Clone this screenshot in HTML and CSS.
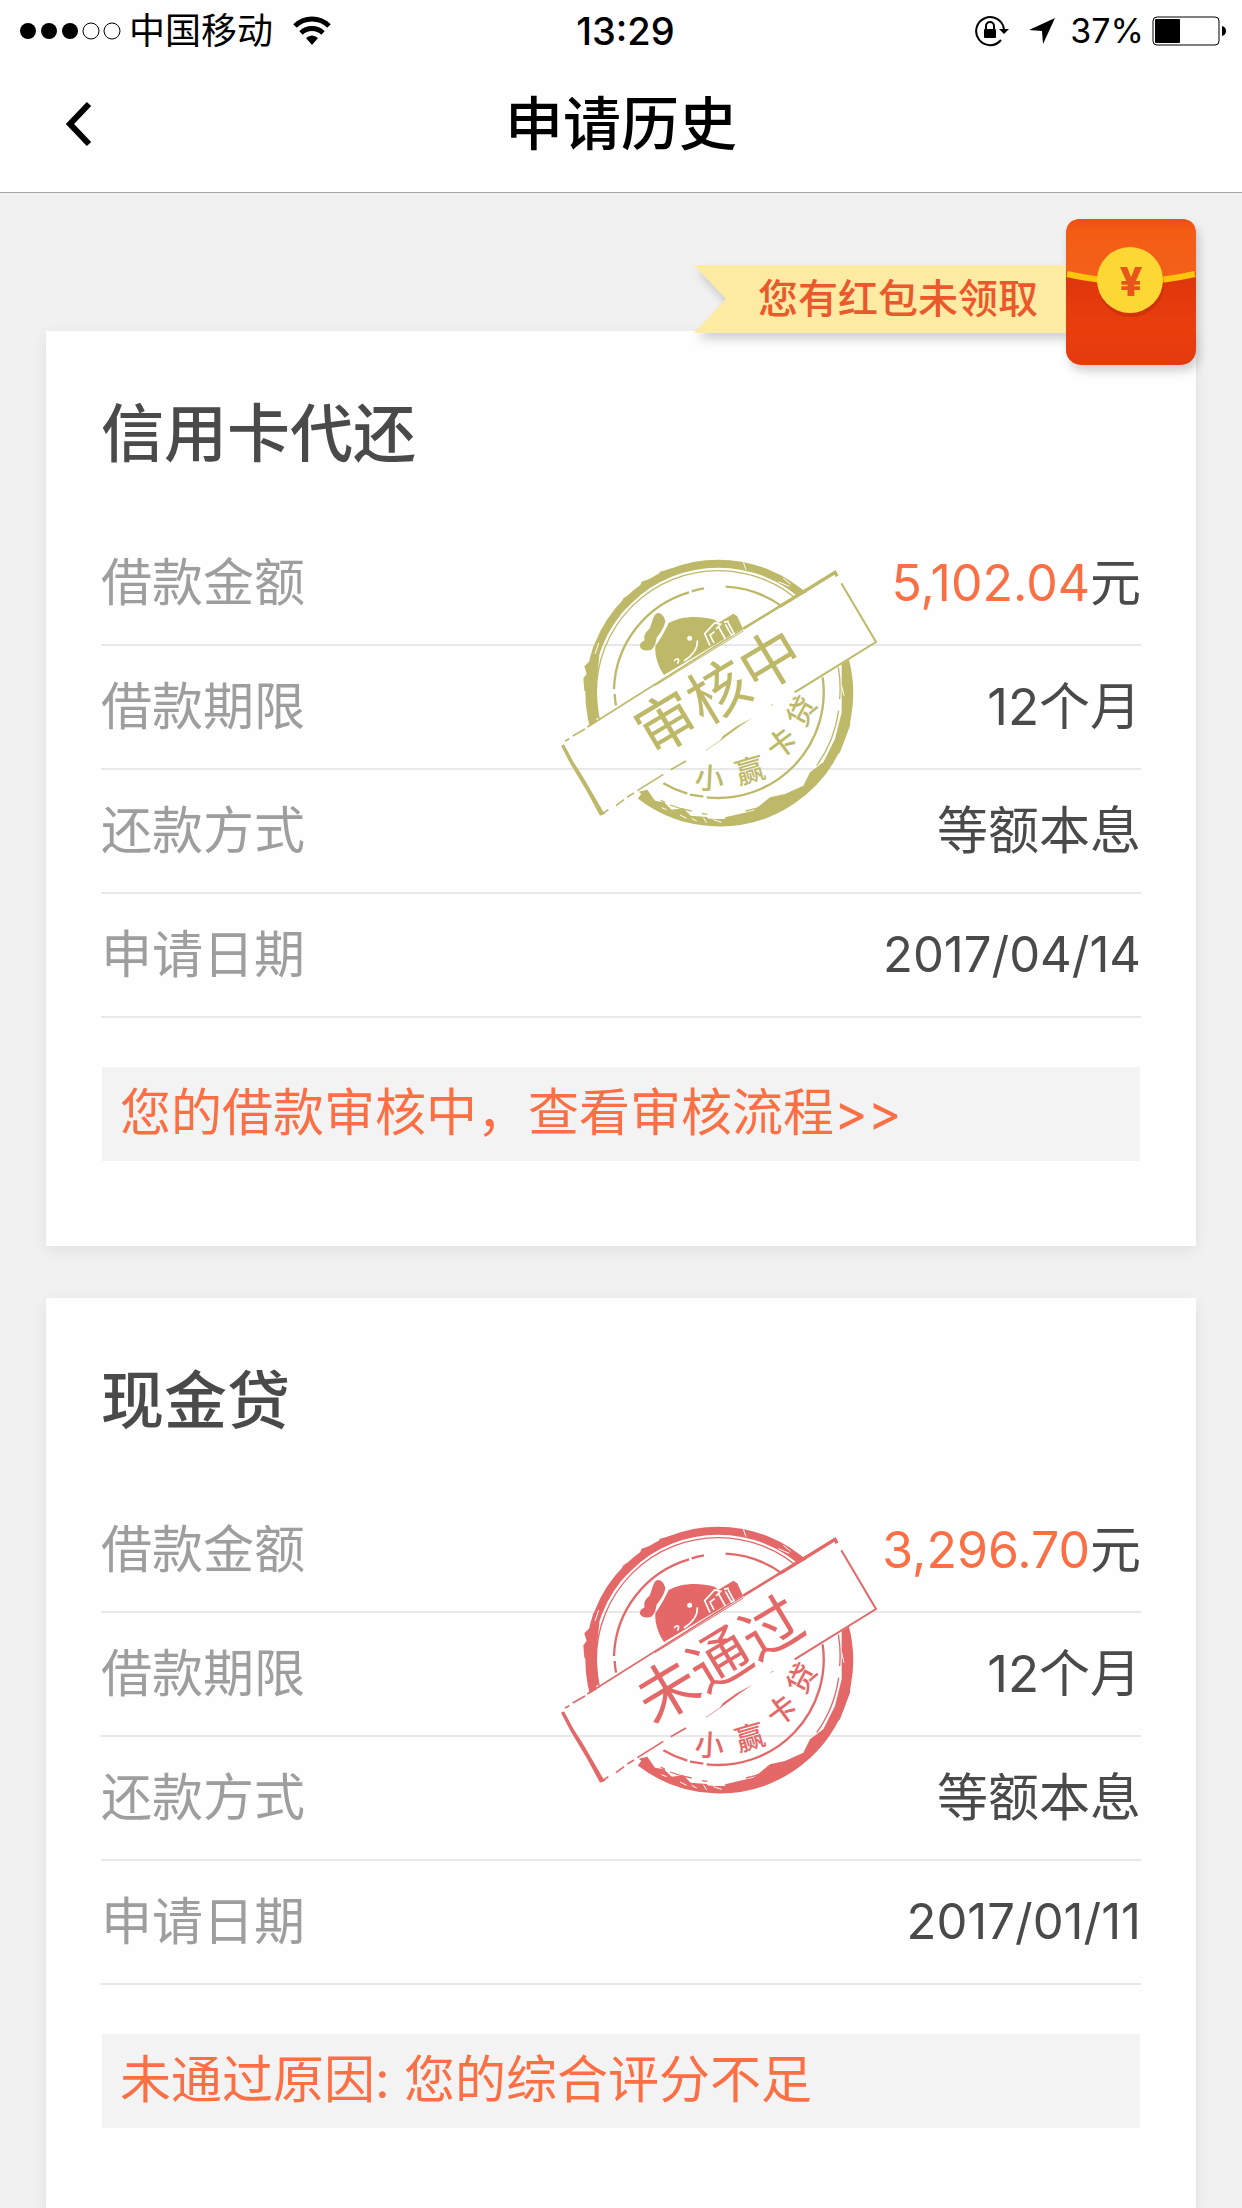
FILE: index.html
```html
<!DOCTYPE html>
<html lang="zh-CN">
<head>
    <meta charset="UTF-8">
    <meta name="viewport" content="width=device-width, initial-scale=1.0">
    <title>申请历史</title>
    <link rel="stylesheet" href="styles.css">
</head>
<body>

<!-- 印章公用图形 -->
<svg class="defs" width="0" height="0" aria-hidden="true">
    <defs>
        <clipPath id="clipTop"><polygon points="0,0 1045,0 0,656"/></clipPath>
        <clipPath id="clipBottom"><polygon points="0,944 1080,266 1080,900 0,900"/></clipPath>
        <g id="stampBase">
            <g fill="none" stroke="currentColor" clip-path="url(#clipTop)">
                <circle cx="535" cy="461" r="387" stroke-width="24"/>
                <circle cx="535" cy="461" r="366" stroke-width="4"/>
                <path d="M228 500 A313 313 0 0 1 224 465 M222 450 A313 313 0 0 1 447 160 M455 157 A313 313 0 0 1 492 148 M557 143 A318 318 0 0 1 730 205" stroke-width="7"/>
            </g>
            <g fill="none" stroke="currentColor" clip-path="url(#clipBottom)">
                <path d="M915 360 A390 390 0 0 1 300 770" stroke-width="22"/>
                <path d="M895 385 A367 367 0 0 1 899 480 M896 515 A367 367 0 0 1 830 680 M720 778 A367 367 0 0 1 618 816 M502 826 L486 824 M455 816 A367 367 0 0 1 390 798 M375 790 L362 783" stroke-width="4"/>
                <path d="M848 415 A317 317 0 0 1 500 775 M490 773 L450 767 M442 764 A317 317 0 0 1 370 733" stroke-width="7"/>
            </g>
            <!-- 外圈毛边 -->
            <g fill="currentColor">
                <path d="M160 320 L150 365 L133 382 L140 405 L130 418 L133 455 L146 462 L148 500 L156 548 L176 535 L168 450 L178 350 Z"/>
                <path d="M236 215 L250 178 L296 150 L305 128 L352 112 L360 98 L400 88 L410 100 L330 140 L262 205 Z"/>
                <path d="M905 375 L925 372 L926 440 L938 440 L930 560 L900 640 L872 668 L850 710 L800 755 L720 808 L640 838 L560 858 L555 835 L640 815 L690 775 L735 765 L790 740 L810 700 L850 670 L885 600 L905 520 Z"/>
                <path d="M728 118 L768 140 L800 160 L775 172 L735 140 L712 130 Z"/>
                <path d="M296 758 L322 752 L345 785 L372 790 L395 812 L430 808 L452 830 L500 834 L520 858 L450 850 L370 818 Z"/>
            </g>
            <g fill="none" stroke="#fff" stroke-width="3">
                <path d="M165 345 L176 312 M610 70 L618 92 M715 128 L748 142 M730 118 L752 136 M365 806 L380 812 M420 828 L440 838 M455 838 L470 846 M490 836 L500 852 M520 842 L545 850 M905 440 L912 470"/>
            </g>
            <!-- 横幅边框 -->
            <g fill="none" stroke="currentColor">
                <path d="M75 606 L88 599 M98 591 L135 570 M142 564 L610 269" stroke-width="5"/>
                <path d="M610 269 L885 100" stroke-width="8"/>
                <path d="M720 202 L885 100 L891 112" stroke-width="10"/>
                <path d="M345 440 L610 276" stroke-width="3"/>
                <path d="M904 133 L1008 309 L764 460" stroke-width="6"/>
                <path d="M392 692 L438 666 M370 706 L292 755 M282 762 L262 774 M252 782 L228 800 M205 812 L185 826" stroke-width="5"/>
                <path d="M700 495 L692 500 M545 602 L498 634" stroke-width="2"/>
            </g>
            <path fill="currentColor" d="M638 536 L600 562 L540 606 L548 592 L590 562 Z"/>
            <path fill="currentColor" d="M63 620 L72 616 L100 668 L128 712 L190 818 L196 824 L180 830 L140 756 L92 676 Z"/>
            <!-- 小赢头像 -->
            <g fill="currentColor">
                <path d="M348 224 C358 218 372 228 376 246 C374 262 362 282 350 296 C348 310 344 324 334 332 C322 336 306 336 300 324 C298 314 306 308 314 304 C310 290 316 280 328 270 C336 256 336 236 348 224 Z"/>
                <path d="M386 252 C420 232 474 228 524 242 L534 252 L580 224 L592 232 L608 268 L372 408 C352 380 344 346 346 322 C358 304 372 282 386 252 Z"/>
            </g>
            <g fill="none" stroke="#fff" stroke-width="5">
                <circle cx="449" cy="298" r="5" fill="#fff"/>
                <path d="M472 304 C474 328 456 350 432 366 M402 366 C414 354 420 360 412 374 M510 320 L494 284 L524 252 L542 256 L528 270 M522 312 L510 288 L524 278 M536 264 L556 300 M552 250 L566 246 M556 256 L574 288 L582 284 L564 250"/>
            </g>
            <g class="stamp-brand" fill="currentColor">
                <text transform="translate(508 718) rotate(3)" dy="31">小</text>
                <text transform="translate(630 695) rotate(-16)" dy="31">赢</text>
                <text transform="translate(725 614) rotate(-37)" dy="31">卡</text>
                <text transform="translate(786 517) rotate(-62)" dy="31">贷</text>
            </g>
        </g>
    </defs>
</svg>

<header class="header">
    <div class="status-bar">
        <div class="status-left">
            <svg width="102" height="18" viewBox="0 0 102 18" aria-hidden="true">
                <circle cx="9" cy="9" r="8"/>
                <circle cx="30" cy="9" r="8"/>
                <circle cx="51" cy="9" r="8"/>
                <circle cx="72" cy="9" r="8" fill="none" stroke="#000"/>
                <circle cx="93" cy="9" r="8" fill="none" stroke="#000"/>
            </svg>
            <span>中国移动</span>
            <svg class="wifi" width="38" height="30" viewBox="0 0 38 30" aria-hidden="true">
                <g fill="none" stroke="#000" stroke-width="5">
                    <path d="M2 10 A24 24 0 0 1 36 10"/>
                    <path d="M8 17 A16 16 0 0 1 30 17"/>
                </g>
                <path d="M19 29 L13 22 Q19 17 25 22 Z"/>
            </svg>
        </div>
        <div class="status-time">13:29</div>
        <div class="status-right">
            <svg width="36" height="32" viewBox="0 0 36 32" aria-hidden="true">
                <path d="M30 14 A14 14 0 1 0 27 25" fill="none" stroke="#000" stroke-width="2"/>
                <path d="M25 14 L35 14 L30 19 Z"/>
                <rect x="10" y="14" width="12" height="9" rx="1"/>
                <path d="M12 15 V11 A4 4 0 0 1 20 11 V15" fill="none" stroke="#000" stroke-width="2"/>
            </svg>
            <svg class="arrow" width="28" height="28" viewBox="0 0 28 28" aria-hidden="true">
                <path d="M27 1 L15 27 L14 14 L1 13 Z"/>
            </svg>
            <span class="battery-level">37%</span>
            <svg width="74" height="30" viewBox="0 0 74 30" aria-hidden="true">
                <rect x="1" y="1" width="66" height="28" rx="4" fill="none" stroke="#000" stroke-width="1"/>
                <rect x="3" y="3" width="25" height="24" rx="1"/>
                <path d="M70 10 Q74 11 74 15 Q74 19 70 20 Z"/>
            </svg>
        </div>
    </div>
    <nav class="nav">
        <button class="back" type="button" aria-label="返回">
            <svg width="26" height="44" viewBox="0 0 26 44" aria-hidden="true">
                <path d="M23 2 L4 22 L23 42" fill="none" stroke="#000" stroke-width="6"/>
            </svg>
        </button>
        <h1>申请历史</h1>
    </nav>
</header>

<main class="content">
    <a class="red-packet" href="#">
        <span class="ribbon">您有红包未领取</span>
        <svg width="130" height="146" viewBox="0 0 130 146" aria-hidden="true">
            <defs>
                <linearGradient id="packetFlap" x1="0" y1="0" x2="0" y2="1">
                    <stop offset="0" stop-color="#ee4f13"/>
                    <stop offset="0.2" stop-color="#f45c14"/>
                    <stop offset="1" stop-color="#f2611a"/>
                </linearGradient>
                <linearGradient id="packetBody" x1="0" y1="0" x2="0" y2="1">
                    <stop offset="0.4" stop-color="#de360c"/>
                    <stop offset="0.75" stop-color="#ea3e0d"/>
                    <stop offset="1" stop-color="#e53a0e"/>
                </linearGradient>
            </defs>
            <rect width="130" height="146" rx="15" fill="url(#packetBody)"/>
            <path d="M0 54 V15 Q0 0 15 0 H115 Q130 0 130 15 V54 Q65 72 0 54 Z" fill="url(#packetFlap)"/>
            <path d="M1 55 Q65 70 129 55" fill="none" stroke="#ffc40c" stroke-width="6"/>
            <circle cx="65" cy="65" r="33" fill="#b92c08" opacity="0.5"/>
            <circle cx="64" cy="61" r="33" fill="#fdd835"/>
            <text class="yen" x="65" y="77">¥</text>
        </svg>
    </a>

    <section class="card">
        <h2>信用卡代还</h2>
        <dl class="details">
            <div class="row"><dt>借款金额</dt><dd><span class="amount">5,102.04</span>元</dd></div>
            <div class="row"><dt>借款期限</dt><dd>12个月</dd></div>
            <div class="row"><dt>还款方式</dt><dd>等额本息</dd></div>
            <div class="row"><dt>申请日期</dt><dd class="date">2017/04/14</dd></div>
        </dl>
        <a class="notice" href="#">您的借款审核中，查看审核流程&gt;&gt;</a>
        <svg class="stamp stamp-pending" viewBox="0 0 1080 900" role="img" aria-label="审核中">
            <use href="#stampBase"/>
            <text class="stamp-text" transform="translate(535 458) rotate(-31)" dy="66">审核中</text>
        </svg>
    </section>

    <section class="card">
        <h2>现金贷</h2>
        <dl class="details">
            <div class="row"><dt>借款金额</dt><dd><span class="amount">3,296.70</span>元</dd></div>
            <div class="row"><dt>借款期限</dt><dd>12个月</dd></div>
            <div class="row"><dt>还款方式</dt><dd>等额本息</dd></div>
            <div class="row"><dt>申请日期</dt><dd class="date">2017/01/11</dd></div>
        </dl>
        <p class="notice">未通过原因: 您的综合评分不足</p>
        <svg class="stamp stamp-rejected" viewBox="0 0 1080 900" role="img" aria-label="未通过">
            <use href="#stampBase"/>
            <text class="stamp-text" transform="translate(538 460) rotate(-31)" dy="66">未通过</text>
        </svg>
    </section>
</main>

</body>
</html>
```

FILE: styles.css
```css
* {
    box-sizing: border-box;
}
body {
    margin: 0;
    background-color: #f1f1f1;
    color: #4a4a4a;
    font-family: Inter, "Noto Sans CJK SC", sans-serif;
}
h1, h2, p, dl, dd {
    margin: 0;
}
a {
    color: inherit;
    text-decoration: none;
}
svg {
    display: block;
    flex: none;
}
.defs {
    position: absolute;
}

/* 顶部 */
.header {
    background-color: #fefefe;
    border-bottom: 1px solid #a8a8a8;
    color: #000;
}
.status-bar {
    display: grid;
    grid-template-columns: 1fr auto 1fr;
    align-items: center;
    height: 56px;
    padding: 6px 16px 0 19px;
    font-size: 36px;
    line-height: 48px;
}
.status-left, .status-right {
    display: flex;
    align-items: center;
    gap: 8px;
}
.status-right {
    justify-content: flex-end;
}
.wifi {
    margin-left: 12px;
}
.arrow {
    margin: 0 6px 0 10px;
}
.battery-level {
    font-size: 34px;
}
.status-time {
    padding-left: 6px;
    font-size: 38px;
    font-weight: 500;
}
.nav {
    display: grid;
    grid-template-columns: 120px 1fr 120px;
    align-items: center;
    height: 136px;
}
.nav h1 {
    font-size: 58px;
    font-weight: 500;
    line-height: 80px;
    text-align: center;
}
.back {
    justify-self: start;
    margin-left: 46px;
    padding: 20px;
    border: none;
    background: none;
    cursor: pointer;
}

/* 红包提示 */
.content {
    position: relative;
    padding: 138px 46px 0;
}
.red-packet {
    position: absolute;
    top: 26px;
    right: 46px;
    z-index: 1;
    display: flex;
    align-items: center;
    filter: drop-shadow(3px 6px 5px rgba(0, 0, 0, 0.18));
}
.ribbon {
    padding: 0 28px 0 64px;
    margin-top: 14px;
    background-color: #fdeaa3;
    clip-path: polygon(0 0, 100% 0, 100% 100%, 0 100%, 32px 50%);
    color: #e9592b;
    font-size: 40px;
    font-weight: 500;
    line-height: 68px;
}
.yen {
    fill: #e9541a;
    font-size: 40px;
    font-weight: 800;
    text-anchor: middle;
}

/* 申请记录 */
.card {
    position: relative;
    margin-bottom: 52px;
    padding: 62px 55px 85px;
    background-color: #fefefe;
    box-shadow: 0 4px 14px rgba(0, 0, 0, 0.07);
}
.card h2 {
    margin-bottom: 49px;
    font-size: 63px;
    font-weight: 500;
    line-height: 80px;
}
.row {
    display: flex;
    justify-content: space-between;
    align-items: center;
    height: 124px;
    border-bottom: 2px solid #e8e8e8;
    font-size: 51px;
    line-height: 72px;
}
.row dt {
    color: #9e9e9e;
}
.row .date {
    font-size: 49px;
}
.amount {
    color: #fb6f45;
    font-size: 50px;
}
.notice {
    display: block;
    margin: 49px 1px 0;
    padding: 9px 18px 11px;
    background-color: #f3f3f3;
    color: #fb6f45;
    font-size: 51px;
    line-height: 74px;
}

/* 印章 */
.stamp {
    position: absolute;
    top: 208px;
    right: 296px;
    width: 360px;
    height: 300px;
}
.stamp-pending {
    color: #bdb968;
}
.stamp-rejected {
    color: #e46868;
}
.stamp-text {
    fill: currentColor;
    font-size: 182px;
    text-anchor: middle;
}
.stamp-brand {
    font-size: 88px;
    font-weight: 500;
    text-anchor: middle;
}
```
